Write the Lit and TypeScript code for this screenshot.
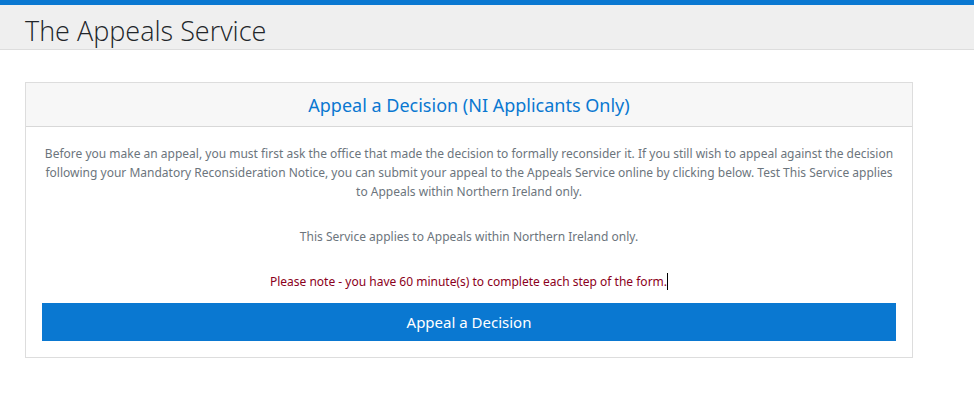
import { LitElement, html, css } from "lit";
import { customElement } from "lit/decorators.js";

@customElement("app-root")
export class AppRoot extends LitElement {
  static styles = css`
    :host { display: block; min-height: 100vh; background: #fff; color: #6c757d; font: 12px/19px "Noto Sans", "Open Sans", sans-serif; }
    * { box-sizing: border-box; }
    header { border-top: 5px solid #0a78d1; border-bottom: 1px solid #ddd; background: #efefef; padding: 8px 25px 0; }
    h1 { margin: 0; font-family: "Open Sans", sans-serif; font-size: 27px; line-height: 36px; font-weight: 300; color: #212529; }
    main { padding: 32px 61px 48px 25px; }
    .card { border: 1px solid #ddd; text-align: center; }
    h2 { margin: 0; padding: 9px 16px 7px; border-bottom: 1px solid #d8d8d8; background: #f7f7f7; color: #0a78d1; font-size: 18px; line-height: 27px; font-weight: 400; }
    .body { padding: 17px 16px 16px; }
    p { margin: 0 0 26px; }
    .note { margin-bottom: 12px; color: #8b0020; }
    .caret { border-right: 1px solid #000; }
    button { display: block; width: 100%; height: 38px; border: 0; padding: 0; background: #0a78d1; color: #fff; font: inherit; font-size: 15px; }
  `;

  render() {
    return html`
      <header><h1>The Appeals Service</h1></header>
      <main>
        <section class="card">
          <h2>Appeal a Decision (NI Applicants Only)</h2>
          <div class="body">
            <p>Before you make an appeal, you must first ask the office that made the decision to formally reconsider it. If you still wish to appeal against the decision following your Mandatory Reconsideration Notice, you can submit your appeal to the Appeals Service online by clicking below. Test This Service applies to Appeals within Northern Ireland only.</p>
            <p>This Service applies to Appeals within Northern Ireland only.</p>
            <p class="note"><span class="caret">Please note - you have 60 minute(s) to complete each step of the form.</span></p>
            <button type="button">Appeal a Decision</button>
          </div>
        </section>
      </main>
    `;
  }
}
